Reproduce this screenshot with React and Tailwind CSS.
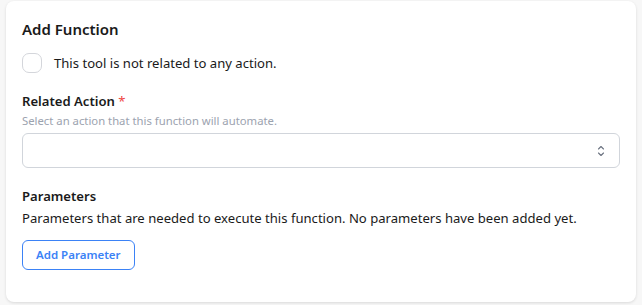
import React from "react";

export default function App() {
  return (
    <div
      className="w-[642px] h-[305px] bg-[#f7f7f7] pl-[6px] pr-[6px] pt-[1px] overflow-hidden"
      style={{ fontFamily: '"Segoe UI", "Noto Sans", "Open Sans", sans-serif' }}
    >
      <div className="w-[630px] h-[301px] bg-white rounded-lg shadow-[0_1px_3px_rgba(0,0,0,0.12)] px-4 pt-4 pb-8 text-[#1a1a1a]">
        <h2 className="text-[15px] leading-6 font-semibold">Add Function</h2>
        <label className="mt-3 flex items-center gap-3 h-5">
          <span className="w-5 h-5 rounded-[7px] border border-[#d4d6db] bg-white"></span>
          <span className="text-[13.1px] leading-5">This tool is not related to any action.</span>
        </label>
        <div className="mt-[18px] text-[13.1px] leading-5 font-semibold">
          Related Action <span className="text-[#ef4444] font-normal">*</span>
        </div>
        <div className="mt-0.5 text-[11.3px] leading-4 text-[#9ca3af]">
          Select an action that this function will automate.
        </div>
        <div className="mt-1 h-[35px] w-full rounded-md border border-[#d1d5db] flex items-center justify-end pr-3">
          <svg width="12" height="14" viewBox="0 0 12 14" fill="none" stroke="#6b7280" strokeWidth="1.1" strokeLinecap="round" strokeLinejoin="round">
            <path d="M3.5 5 L6 2.5 L8.5 5" />
            <path d="M3.5 9 L6 11.5 L8.5 9" />
          </svg>
        </div>
        <div className="mt-[18px] text-[13.1px] leading-5 font-semibold">Parameters</div>
        <div className="mt-0.5 text-[13.1px] leading-5">
          Parameters that are needed to execute this function. No parameters have been added yet.
        </div>
        <button className="mt-3 h-[30px] px-[13px] rounded-md border border-[#3b82f6] text-[#3b82f6] text-[11.5px] font-semibold bg-white">
          Add Parameter
        </button>
      </div>
    </div>
  );
}
